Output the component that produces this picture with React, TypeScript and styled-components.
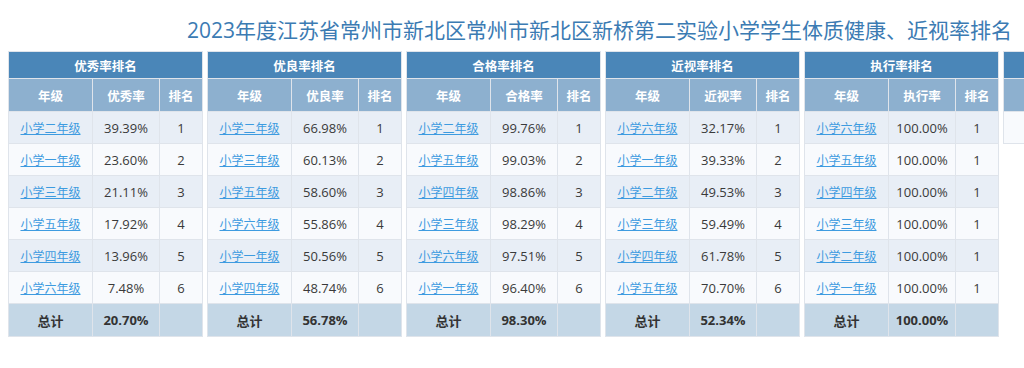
import React from "react";
import styled, { createGlobalStyle } from "styled-components";

const Global = createGlobalStyle`
  html, body { margin: 0; padding: 0; background: #ffffff; }
  body { font-family: "Open Sans", "Noto Sans CJK SC", sans-serif; }
`;

const Page = styled.div`
  width: 1024px;
  height: 368px;
  overflow: hidden;
  box-sizing: border-box;
  padding: 0 0 0 8px;
`;

const Title = styled.h1`
  margin: 0;
  height: 51px;
  box-sizing: border-box;
  padding: 16px 12px 0 0;
  text-align: right;
  white-space: nowrap;
  font-family: "Open Sans", "Noto Sans CJK SC", sans-serif;
  font-weight: 400;
  font-size: 21px;
  line-height: 28px;
  color: #3b7bb3;
`;

const Tables = styled.div`
  display: flex;
  flex-wrap: nowrap;
  gap: 4px;
  align-items: flex-start;
`;

const Table = styled.table`
  flex: 0 0 auto;
  width: 194px;
  border-collapse: collapse;
  table-layout: fixed;
  font-size: 13px;
  color: #3a3a3a;
`;

const Col = styled.col<{ $w: number }>`
  width: ${(p) => p.$w}px;
`;

const Cell = styled.td`
  border: 1px solid #dfe4eb;
  text-align: center;
  padding: 0;
  height: 31px;
  white-space: nowrap;
`;

const Caption = styled.th`
  background: #4a86b8;
  color: #ffffff;
  font-weight: 700;
  font-size: 12.5px;
  height: 26px;
  border: 1px solid #dfe4eb;
  padding: 0;
`;

const HeadCell = styled.th`
  background: #8db0cf;
  color: #ffffff;
  font-weight: 700;
  font-size: 12.5px;
  height: 32px;
  border: 1px solid #dfe4eb;
  padding: 0;
`;

const Row = styled.tr<{ $alt: boolean }>`
  background: ${(p) => (p.$alt ? "#f8fafd" : "#e8eef6")};
`;

const TotalRow = styled.tr`
  background: #c4d7e6;
  font-weight: 700;
  color: #333;
  & > td { height: 32px; }
`;

const GradeLink = styled.a`
  color: #3d9be0;
  text-decoration: underline;
  font-size: 12px;
`;

type Item = [string, string, string];
type Data = { title: string; col: string; rows: Item[]; total: string };

const data: Data[] = [
  {
    title: "优秀率排名",
    col: "优秀率",
    rows: [
      ["小学二年级", "39.39%", "1"],
      ["小学一年级", "23.60%", "2"],
      ["小学三年级", "21.11%", "3"],
      ["小学五年级", "17.92%", "4"],
      ["小学四年级", "13.96%", "5"],
      ["小学六年级", "7.48%", "6"],
    ],
    total: "20.70%",
  },
  {
    title: "优良率排名",
    col: "优良率",
    rows: [
      ["小学二年级", "66.98%", "1"],
      ["小学三年级", "60.13%", "2"],
      ["小学五年级", "58.60%", "3"],
      ["小学六年级", "55.86%", "4"],
      ["小学一年级", "50.56%", "5"],
      ["小学四年级", "48.74%", "6"],
    ],
    total: "56.78%",
  },
  {
    title: "合格率排名",
    col: "合格率",
    rows: [
      ["小学二年级", "99.76%", "1"],
      ["小学五年级", "99.03%", "2"],
      ["小学四年级", "98.86%", "3"],
      ["小学三年级", "98.29%", "4"],
      ["小学六年级", "97.51%", "5"],
      ["小学一年级", "96.40%", "6"],
    ],
    total: "98.30%",
  },
  {
    title: "近视率排名",
    col: "近视率",
    rows: [
      ["小学六年级", "32.17%", "1"],
      ["小学一年级", "39.33%", "2"],
      ["小学二年级", "49.53%", "3"],
      ["小学三年级", "59.49%", "4"],
      ["小学四年级", "61.78%", "5"],
      ["小学五年级", "70.70%", "6"],
    ],
    total: "52.34%",
  },
  {
    title: "执行率排名",
    col: "执行率",
    rows: [
      ["小学六年级", "100.00%", "1"],
      ["小学五年级", "100.00%", "1"],
      ["小学四年级", "100.00%", "1"],
      ["小学三年级", "100.00%", "1"],
      ["小学二年级", "100.00%", "1"],
      ["小学一年级", "100.00%", "1"],
    ],
    total: "100.00%",
  },
];

const RankTable: React.FC<{ d: Data }> = ({ d }) => (
  <Table>
    <colgroup>
      <Col $w={84} />
      <Col $w={67} />
      <Col $w={43} />
    </colgroup>
    <thead>
      <tr>
        <Caption colSpan={3}>{d.title}</Caption>
      </tr>
      <tr>
        <HeadCell>年级</HeadCell>
        <HeadCell>{d.col}</HeadCell>
        <HeadCell>排名</HeadCell>
      </tr>
    </thead>
    <tbody>
      {d.rows.map((r, i) => (
        <Row key={i} $alt={i % 2 === 1}>
          <Cell>
            <GradeLink href="#">{r[0]}</GradeLink>
          </Cell>
          <Cell>{r[1]}</Cell>
          <Cell>{r[2]}</Cell>
        </Row>
      ))}
      <TotalRow>
        <Cell>总计</Cell>
        <Cell>{d.total}</Cell>
        <Cell></Cell>
      </TotalRow>
    </tbody>
  </Table>
);

export default function App() {
  return (
    <Page>
      <Global />
      <Title>2023年度江苏省常州市新北区常州市新北区新桥第二实验小学学生体质健康、近视率排名</Title>
      <Tables>
        {data.map((d) => (
          <RankTable key={d.title} d={d} />
        ))}
        <Table>
          <thead>
            <tr>
              <Caption>&nbsp;</Caption>
            </tr>
            <tr>
              <HeadCell>&nbsp;</HeadCell>
            </tr>
          </thead>
          <tbody>
            <Row $alt={true}>
              <Cell></Cell>
            </Row>
          </tbody>
        </Table>
      </Tables>
    </Page>
  );
}
